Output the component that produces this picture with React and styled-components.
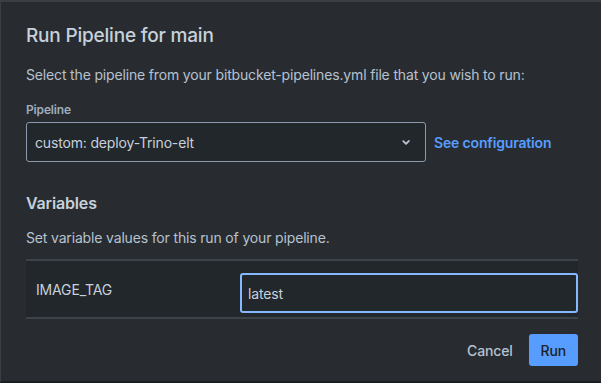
import React from 'react';
import styled, { createGlobalStyle } from 'styled-components';

const GlobalStyle = createGlobalStyle`
  html, body {
    margin: 0;
    padding: 0;
    background: #1d2125;
  }
  body {
    font-family: Inter, "Liberation Sans", Arial, sans-serif;
    -webkit-font-smoothing: antialiased;
  }
`;

// Run pipeline dialog
const App = () => {
  return (
    <>
      <GlobalStyle />
      <Dialog>
        <Title>Run Pipeline for main</Title>
        <Text>
          Select the pipeline from your bitbucket-pipelines.yml file that you
          wish to run:
        </Text>
        <Label>Pipeline</Label>
        <SelectRow>
          <Select>
            <span>custom: deploy-Trino-elt</span>
            <Chevron viewBox="0 0 24 24" aria-hidden="true">
              <path
                d="M8.3 10.3a1 1 0 0 1 1.4 0L12 12.6l2.3-2.3a1 1 0 1 1 1.4 1.4l-3 3a1 1 0 0 1-1.4 0l-3-3a1 1 0 0 1 0-1.4z"
                fill="currentColor"
              />
            </Chevron>
          </Select>
          <Link href="#">See configuration</Link>
        </SelectRow>
        <SubTitle>Variables</SubTitle>
        <Text>Set variable values for this run of your pipeline.</Text>
        <Table>
          <Row>
            <VarName>IMAGE_TAG</VarName>
            <Input defaultValue="latest" />
          </Row>
        </Table>
        <Footer>
          <Button>Cancel</Button>
          <Button primary>Run</Button>
        </Footer>
      </Dialog>
    </>
  );
};

const Dialog = styled.div`
  box-sizing: border-box;
  width: 601px;
  height: 383px;
  background: #282c31;
  border-top: 2px solid #3a3f45;
  border-left: 1px solid #3a3f45;
  border-bottom: 2px solid #1a1d21;
  padding: 20px 23px 0 25px;
  display: flex;
  flex-direction: column;
  color: #b6c2cf;
  letter-spacing: -0.16px;
`;

const Title = styled.h1`
  margin: 0;
  font-size: 19px;
  font-weight: 500;
  line-height: 28px;
  letter-spacing: -0.2px;
  color: #c7d1db;
`;

const Text = styled.p`
  margin: 15px 0 0;
  font-size: 14px;
  line-height: 20px;
  color: #b6c2cf;
`;

const Label = styled.label`
  margin-top: 17px;
  font-size: 12px;
  font-weight: 600;
  line-height: 16px;
  color: #9fadbc;
`;

const SelectRow = styled.div`
  margin-top: 4px;
  display: flex;
  align-items: center;
  gap: 8px;
`;

const Select = styled.div`
  box-sizing: border-box;
  width: 400px;
  height: 40px;
  border: 1px solid #8c9bab;
  border-radius: 3px;
  background: #22272b;
  display: flex;
  align-items: center;
  justify-content: space-between;
  padding: 0 8px 0 8px;
  font-size: 14px;
  color: #c7d1db;
`;

const Chevron = styled.svg`
  width: 22px;
  height: 22px;
  color: #b6c2cf;
`;

const Link = styled.a`
  font-size: 14px;
  font-weight: 600;
  color: #579dff;
  text-decoration: none;
`;

const SubTitle = styled.h2`
  margin: 31px 0 0;
  font-size: 16px;
  font-weight: 600;
  line-height: 20px;
  color: #c7d1db;
`;

const Table = styled.div`
  margin-top: 11px;
  width: 552px;
  border-top: 2px solid #3d434a;
  border-bottom: 2px solid #3d434a;
`;

const Row = styled.div`
  height: 56px;
  background: #22272b;
  display: grid;
  grid-template-columns: 204px 1fr;
  align-items: center;
  padding-left: 10px;
`;

const VarName = styled.span`
  font-size: 14px;
  color: #c7d1db;
`;

const Input = styled.input`
  box-sizing: border-box;
  height: 40px;
  width: 338px;
  margin-top: 8px;
  border: 2px solid #85b8ff;
  border-radius: 3px;
  background: #22272b;
  padding: 0 6px;
  font-family: inherit;
  font-size: 14px;
  letter-spacing: inherit;
  color: #c7d1db;
  outline: none;
`;

const Footer = styled.div`
  margin-top: 15px;
  display: flex;
  justify-content: flex-end;
  gap: 4px;
`;

const Button = styled.button`
  height: 32px;
  padding: 0 12px;
  border: none;
  border-radius: 3px;
  font-family: inherit;
  font-size: 14px;
  font-weight: 500;
  letter-spacing: inherit;
  background: ${({ primary }) => (primary ? '#579dff' : 'transparent')};
  color: ${({ primary }) => (primary ? '#1d2125' : '#b6c2cf')};
`;

export default App;
